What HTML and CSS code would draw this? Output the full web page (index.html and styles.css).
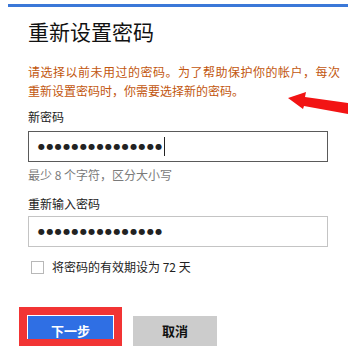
FILE: index.html
```html
<!DOCTYPE html>
<html lang="zh-CN">
<head>
<meta charset="utf-8">
<link rel="stylesheet" href="styles.css">
</head>
<body>
<div class="topbar"></div>
<main class="panel">
  <h1 class="title">重新设置密码</h1>
  <p class="desc"><span class="line1">请选择以前未用过的密码。为了帮助保护你的帐户，每次</span><span>重新设置密码时，你需要选择新的密码。</span></p>
  <label class="label">新密码</label>
  <div class="field focused"><span class="dots">●●●●●●●●●●●●●●●</span><span class="caret"></span></div>
  <div class="hint">最少 8 个字符，区分大小写</div>
  <label class="label label2">重新输入密码</label>
  <div class="field"><span class="dots">●●●●●●●●●●●●●●●</span></div>
  <div class="check-row"><span class="checkbox"></span><span>将密码的有效期设为 72 天</span></div>
  <div class="buttons">
    <button class="btn primary">下一步</button>
    <button class="btn secondary">取消</button>
  </div>
</main>
<div class="red-frame"></div>
<svg class="arrow" width="348" height="348" viewBox="0 0 348 348">
  <polygon points="288,98 306,92 305,97 348,103 348,114 304,106 303,109" fill="#f21414"/>
</svg>
</body>
</html>
```
FILE: styles.css
```css
html, body {
  margin: 0;
  padding: 0;
  background: #fff;
  width: 348px;
  height: 348px;
  overflow: hidden;
}
body {
  font-family: "Noto Sans CJK SC", "Noto Sans", sans-serif;
  color: #222;
  position: relative;
}
.topbar {
  margin: 4px 0 0 8px;
  height: 3px;
  background: #3b78d8;
}
.panel {
  padding-left: 28px;
  width: 300px;
  display: flex;
  flex-direction: column;
}
.title {
  margin: 10px 0 0;
  font-size: 21px;
  font-weight: 400;
  line-height: 28px;
  color: #111;
}
.desc {
  margin: 17px 0 0;
  width: 300px;
  font-size: 12px;
  line-height: 19px;
  color: #c2560e;
}
.desc span {
  display: block;
  white-space: nowrap;
}
.desc .line1 {
  text-align: justify;
  text-align-last: justify;
  letter-spacing: 0.5px;
}
.label {
  display: block;
  margin-top: 9px;
  font-size: 12px;
  line-height: 16px;
  color: #222;
}
.label2 {
  margin-top: 13px;
}
.field {
  margin-top: 6px;
  box-sizing: border-box;
  height: 31px;
  width: 300px;
  border: 1px solid #c4c4c4;
  display: flex;
  align-items: center;
  padding-left: 9px;
}
.label2 + .field {
  margin-top: 4px;
}
.field.focused {
  border-color: #5a5a5a;
}
.dots {
  font-family: "DejaVu Sans", sans-serif;
  font-size: 8px;
  letter-spacing: 1.4px;
  color: #222;
  line-height: 12px;
}
.caret {
  width: 1px;
  height: 19px;
  background: #222;
  margin-left: 0;
}
.hint {
  margin-top: 5px;
  font-size: 12px;
  line-height: 16px;
  color: #7a7a7a;
}
.check-row {
  margin-top: 12px;
  display: flex;
  align-items: center;
  gap: 8px;
  padding-left: 3px;
  font-size: 12px;
  line-height: 16px;
  color: #222;
}
.checkbox {
  box-sizing: border-box;
  width: 13px;
  height: 13px;
  border: 1px solid #b8b8b8;
  background: #fff;
}
.buttons {
  margin-top: 41px;
  margin-left: -1px;
  display: flex;
  gap: 19px;
}
.btn {
  box-sizing: border-box;
  height: 30px;
  border: 0;
  padding: 0;
  font-family: "Noto Sans CJK SC", sans-serif;
  font-size: 13px;
  font-weight: 700;
  line-height: 30px;
}
.primary {
  width: 87px;
  background: #2f6fe4;
  color: #fff;
  border-left: 1px solid #fff;
  border-right: 1px solid #fff;
}
.secondary {
  width: 84px;
  background: #cccccc;
  color: #111;
}
.red-frame {
  position: absolute;
  left: 19px;
  top: 307px;
  width: 103px;
  height: 39px;
  box-sizing: border-box;
  border: 8px solid #f23434;
  border-bottom-width: 7px;
}
.arrow {
  position: absolute;
  left: 0;
  top: 0;
  pointer-events: none;
}
```
